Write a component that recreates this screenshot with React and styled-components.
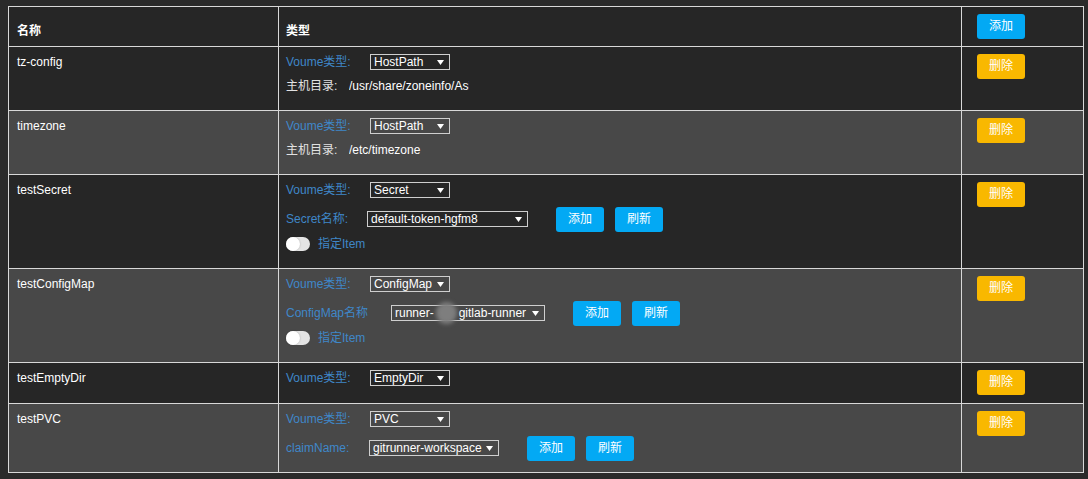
import React from 'react';
import styled, { createGlobalStyle } from 'styled-components';

const GlobalStyle = createGlobalStyle`
  html, body {
    margin: 0;
    padding: 0;
    background: #2a2a2a;
  }
  body {
    font-family: 'Liberation Sans', 'Noto Sans CJK SC', sans-serif;
    font-size: 12px;
    color: #fff;
  }
`;

const Page = styled.div`
  box-sizing: border-box;
  min-height: 479px;
  padding: 6px 0 0 8px;
`;

const Table = styled.table`
  width: 1075px;
  border-collapse: collapse;
  table-layout: fixed;
`;

const Row = styled.tr`
  background: ${(p) => (p.$alt ? '#484848' : '#262626')};
`;

const Th = styled.th`
  border: 1px solid #d8d8d8;
  padding: 7px ${(p) => p.$pl}px;
  text-align: left;
  vertical-align: bottom;
  font-weight: bold;
  font-size: 12px;
  line-height: 16px;
  color: #fff;
`;

const Td = styled.td`
  border: 1px solid #d8d8d8;
  padding: 7px ${(p) => p.$pl}px 8px;
  vertical-align: top;
  line-height: 16px;
`;

const Field = styled.div`
  display: flex;
  align-items: center;
  height: ${(p) => p.$h || 16}px;
  margin-bottom: ${(p) => (p.$mb === undefined ? 8 : p.$mb)}px;
`;

const Label = styled.span`
  flex-shrink: 0;
  width: ${(p) => p.$w}px;
  color: ${(p) => (p.$plain ? '#e2e2e2' : '#3f87c8')};
  white-space: nowrap;
`;

const SelectBox = styled.div`
  box-sizing: border-box;
  display: flex;
  align-items: center;
  flex-shrink: 0;
  width: ${(p) => p.$w}px;
  height: 16px;
  padding: 0 5px 0 3px;
  border: 1px solid #cfcfcf;
  color: #fff;
  line-height: 14px;
`;

const SelectText = styled.span`
  flex: 1;
  white-space: nowrap;
`;

const Blot = styled.span`
  display: inline-block;
  width: 21px;
  height: 22px;
  margin: -4px 2px -4px 2px;
  border-radius: 50%;
  background: #7e7e7e;
  filter: blur(2px);
  vertical-align: middle;
`;

const PathInput = styled.input`
  width: 120px;
  padding: 0;
  border: none;
  background: transparent;
  color: #fff;
  font: inherit;
  outline: none;
`;

const Button = styled.button`
  display: block;
  flex-shrink: 0;
  width: 48px;
  height: 25px;
  margin-left: ${(p) => p.$ml || 0}px;
  padding: 0;
  border: none;
  border-radius: 3px;
  background: ${(p) => (p.$danger ? '#f9b800' : '#03a9f4')};
  color: #fff;
  font-family: 'Liberation Sans', 'Noto Sans CJK SC', sans-serif;
  font-size: 12px;
  line-height: 25px;
`;

const Toggle = styled.span`
  position: relative;
  display: inline-block;
  width: 24px;
  height: 14px;
  border-radius: 7px;
  background: #e4e4e4;
  &::after {
    content: '';
    position: absolute;
    left: 0;
    top: 0;
    width: 14px;
    height: 14px;
    border-radius: 50%;
    background: #fff;
    box-shadow: 0 0 2px rgba(0, 0, 0, 0.25);
  }
`;

const ToggleLabel = styled.span`
  margin-left: 8px;
  color: #3f87c8;
`;

const Arrow = () => (
  <svg width="7" height="5" viewBox="0 0 7 5">
    <polygon points="0,0 7,0 3.5,5" fill="#fff" />
  </svg>
);

const Select = ({ width, children }) => (
  <SelectBox $w={width}>
    <SelectText>{children}</SelectText>
    <Arrow />
  </SelectBox>
);

const volumes = [
  { name: 'tz-config', type: 'HostPath', path: '/usr/share/zoneinfo/Asia/Shanghai' },
  { name: 'timezone', type: 'HostPath', path: '/etc/timezone' },
  {
    name: 'testSecret',
    type: 'Secret',
    ref: { label: 'Secret名称:', lw: 81, sw: 161, value: 'default-token-hgfm8' },
    item: true,
  },
  {
    name: 'testConfigMap',
    type: 'ConfigMap',
    ref: {
      label: 'ConfigMap名称',
      lw: 105,
      sw: 154,
      value: (
        <>
          runner-<Blot />gitlab-runner
        </>
      ),
    },
    item: true,
  },
  { name: 'testEmptyDir', type: 'EmptyDir' },
  {
    name: 'testPVC',
    type: 'PVC',
    ref: { label: 'claimName:', lw: 83, sw: 130, value: 'gitrunner-workspace' },
  },
];

// host path, secret/configmap/pvc reference and item toggle only show for some types
const VolumeFields = ({ volume }) => {
  const { type, path, ref, item } = volume;
  return (
    <>
      <Field>
        <Label $w={84}>Voume类型:</Label>
        <Select width={80}>{type}</Select>
      </Field>
      {path && (
        <Field>
          <Label $w={63} $plain>
            主机目录:
          </Label>
          <PathInput readOnly value={path} />
        </Field>
      )}
      {ref && (
        <Field $h={26} $mb={3}>
          <Label $w={ref.lw}>{ref.label}</Label>
          <Select width={ref.sw}>{ref.value}</Select>
          <Button $ml={28}>添加</Button>
          <Button $ml={11}>刷新</Button>
        </Field>
      )}
      {item && (
        <Field $h={17}>
          <Toggle />
          <ToggleLabel>指定Item</ToggleLabel>
        </Field>
      )}
    </>
  );
};

const App = () => (
  <Page>
    <GlobalStyle />
    <Table>
      <colgroup>
        <col style={{ width: 270 }} />
        <col style={{ width: 683 }} />
        <col style={{ width: 122 }} />
      </colgroup>
      <thead>
        <Row>
          <Th $pl={8}>名称</Th>
          <Th $pl={7}>类型</Th>
          <Th $pl={15}>
            <Button>添加</Button>
          </Th>
        </Row>
      </thead>
      <tbody>
        {volumes.map((v, i) => (
          <Row key={v.name} $alt={i % 2 === 1}>
            <Td $pl={8}>{v.name}</Td>
            <Td $pl={7}>
              <VolumeFields volume={v} />
            </Td>
            <Td $pl={15}>
              <Button $danger>删除</Button>
            </Td>
          </Row>
        ))}
      </tbody>
    </Table>
  </Page>
);

export default App;
